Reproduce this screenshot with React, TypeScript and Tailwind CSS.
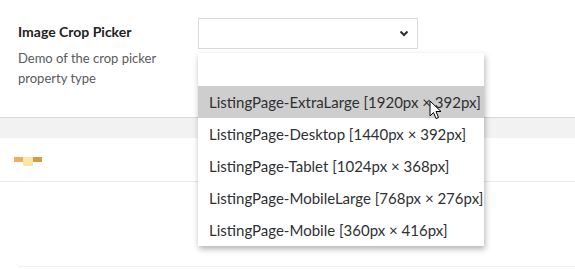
import React from "react";

const options = [
  "",
  "ListingPage-ExtraLarge [1920px × 392px]",
  "ListingPage-Desktop [1440px × 392px]",
  "ListingPage-Tablet [1024px × 368px]",
  "ListingPage-MobileLarge [768px × 276px]",
  "ListingPage-Mobile [360px × 416px]",
];

const Cursor = () => (
  <svg width="14" height="21" viewBox="0 0 14 21" className="absolute left-[429px] top-[100px]">
    <path
      d="M1 1 L1 16 L4.5 12.5 L7 18.5 L9.5 17.5 L7 11.5 L12 11.5 Z"
      fill="white"
      stroke="black"
      strokeWidth="1"
      strokeLinejoin="round"
    />
  </svg>
);

const App = () => {
  return (
    <div className="relative w-[575px] h-[269px] overflow-hidden bg-white font-['Lato',sans-serif] text-[#303033]">
      {/* property row */}
      <div className="flex h-[117px] px-[18px]">
        <div className="w-[180px] pt-[22px]">
          <div className="text-[14px] leading-[20px] font-bold text-[#222222]">Image Crop Picker</div>
          <div className="mt-[6px] text-[13px] leading-[20px] text-[#5a5a5c]">
            Demo of the crop picker
            <br />
            property type
          </div>
        </div>
        <div className="pt-[18px]">
          <div className="flex h-[31px] w-[220px] items-center justify-end border border-[#d8d7d9] bg-white pr-[8px]">
            <svg width="10" height="7" viewBox="0 0 10 7">
              <path d="M1.5 1.5 L5 5 L8.5 1.5" fill="none" stroke="#303033" strokeWidth="2" />
            </svg>
          </div>
        </div>
      </div>

      {/* grey band */}
      <div className="h-[21px] border-t border-[#d8d7d9] bg-[#f3f2f3]" />

      {/* loader */}
      <div className="flex h-[44px] items-start border-b border-[#e9e9eb] pl-[14px] pt-[19px]">
        <div className="h-[5px] w-[9px] bg-[#eaae65]" />
        <div className="h-[9px] w-[10px] bg-[#fde5a3]" />
        <div className="h-[5px] w-[9px] bg-[#d99a44]" />
      </div>

      <div className="ml-[18px] mt-[84px] border-t border-[#f0f0f0]" />

      {/* open select list */}
      <div className="absolute left-[198px] top-[53px] w-[286px] bg-white shadow-[1px_3px_6px_rgba(0,0,0,0.3)]">
        {options.map((o, i) => (
          <div
            key={i}
            className={`h-[32px] pl-[11px] text-[15px] leading-[32px] whitespace-nowrap ${
              i === 1 ? "bg-[#cecece]" : ""
            } ${i === 0 ? "h-[33px]" : ""}`}
          >
            {o}
          </div>
        ))}
      </div>

      <Cursor />
    </div>
  );
};

export default App;
